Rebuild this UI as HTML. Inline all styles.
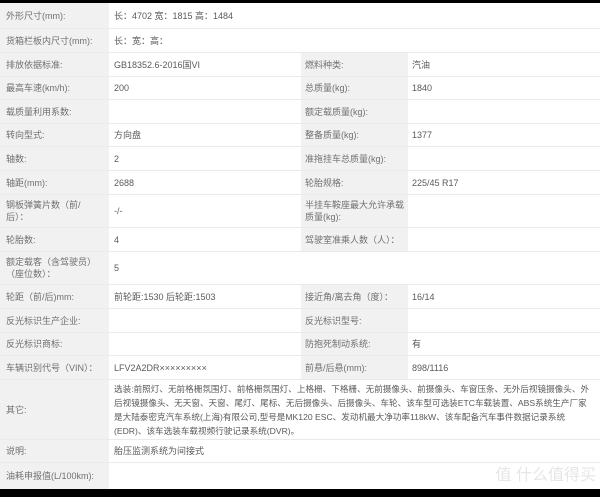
<!DOCTYPE html>
<html><head><meta charset="utf-8"><style>
body{margin:0;width:600px;height:497px;background:#000;overflow:hidden;font-family:"Liberation Sans","Noto Sans CJK SC",sans-serif;font-size:9px;color:#707070}
#t{position:absolute;left:0;top:3px;width:600px;height:486px;background:#fff}
.r{position:absolute;left:0;width:600px;border-bottom:1px solid #eaeaea;box-sizing:border-box}
.c{position:absolute;top:0;bottom:0;display:flex;align-items:center;box-sizing:border-box;padding-left:6px;line-height:12px}
.l1{left:0;width:109px;background:#f1f1f1}
.v1{left:109px;width:192px;padding-left:5px;color:#5a5a5a}
.l2{left:301px;width:107px;background:#f1f1f1;padding-left:4px}
.v2{left:408px;width:192px;padding-left:4px;color:#5a5a5a}
.vw{left:109px;width:491px;padding-left:5px;color:#5a5a5a}
</style></head><body><div id="t">
<div class="r" style="top:0;height:26px"><div class="c l1">外形尺寸(mm):</div><div class="c vw">长：4702 宽：1815 高：1484</div></div>
<div class="r" style="top:26px;height:24px"><div class="c l1">货箱栏板内尺寸(mm):</div><div class="c vw">长：宽：高：</div></div>
<div class="r" style="top:50px;height:24px"><div class="c l1">排放依据标准:</div><div class="c v1">GB18352.6-2016国VI</div><div class="c l2">燃料种类:</div><div class="c v2">汽油</div></div>
<div class="r" style="top:74px;height:23px"><div class="c l1">最高车速(km/h):</div><div class="c v1">200</div><div class="c l2">总质量(kg):</div><div class="c v2">1840</div></div>
<div class="r" style="top:97px;height:24px"><div class="c l1">载质量利用系数:</div><div class="c v1"></div><div class="c l2">额定载质量(kg):</div><div class="c v2"></div></div>
<div class="r" style="top:121px;height:23px"><div class="c l1">转向型式:</div><div class="c v1">方向盘</div><div class="c l2">整备质量(kg):</div><div class="c v2">1377</div></div>
<div class="r" style="top:144px;height:24px"><div class="c l1">轴数:</div><div class="c v1">2</div><div class="c l2">准拖挂车总质量(kg):</div><div class="c v2"></div></div>
<div class="r" style="top:168px;height:24px"><div class="c l1">轴距(mm):</div><div class="c v1">2688</div><div class="c l2">轮胎规格:</div><div class="c v2">225/45 R17</div></div>
<div class="r" style="top:192px;height:33px"><div class="c l1">钢板弹簧片数（前/<br>后）：</div><div class="c v1">-/-</div><div class="c l2">半挂车鞍座最大允许承载<br>质量(kg):</div><div class="c v2"></div></div>
<div class="r" style="top:225px;height:24px"><div class="c l1">轮胎数:</div><div class="c v1">4</div><div class="c l2">驾驶室准乘人数（人）：</div><div class="c v2"></div></div>
<div class="r" style="top:249px;height:33px"><div class="c l1">额定载客（含驾驶员）<br>（座位数）：</div><div class="c vw">5</div></div>
<div class="r" style="top:282px;height:24px"><div class="c l1">轮距（前/后)mm:</div><div class="c v1">前轮距:1530 后轮距:1503</div><div class="c l2">接近角/离去角（度）：</div><div class="c v2">16/14</div></div>
<div class="r" style="top:306px;height:24px"><div class="c l1">反光标识生产企业:</div><div class="c v1"></div><div class="c l2">反光标识型号:</div><div class="c v2"></div></div>
<div class="r" style="top:330px;height:23px"><div class="c l1">反光标识商标:</div><div class="c v1"></div><div class="c l2">防抱死制动系统:</div><div class="c v2">有</div></div>
<div class="r" style="top:353px;height:24px"><div class="c l1">车辆识别代号（VIN）：</div><div class="c v1">LFV2A2DR×××××××××</div><div class="c l2">前悬/后悬(mm):</div><div class="c v2">898/1116</div></div>
<div class="r" style="top:377px;height:60px"><div class="c l1">其它:</div><div class="c vw" style="font-size:8.6px;line-height:14px;padding-right:10px">选装:前照灯、无前格栅氛围灯、前格栅氛围灯、上格栅、下格栅、无前摄像头、前摄像头、车窗压条、无外后视镜摄像头、外后视镜摄像头、无天窗、天窗、尾灯、尾标、无后摄像头、后摄像头、车轮、该车型可选装ETC车载装置、ABS系统生产厂家是大陆泰密克汽车系统(上海)有限公司,型号是MK120 ESC、发动机最大净功率118kW、该车配备汽车事件数据记录系统(EDR)、该车选装车载视频行驶记录系统(DVR)。</div></div>
<div class="r" style="top:437px;height:23px"><div class="c l1">说明:</div><div class="c vw">胎压监测系统为间接式</div></div>
<div class="r" style="top:460px;height:26px;border:none"><div class="c l1">油耗申报值(L/100km):</div><div class="c vw" style="justify-content:flex-end;padding-right:4px;font-size:16px;color:#e6e6e6">值 什么值得买</div></div>
</div></body></html>
